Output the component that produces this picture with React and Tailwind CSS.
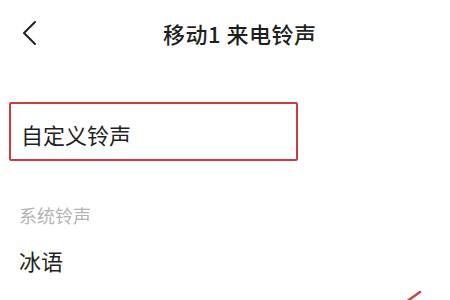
import React from "react";

export default function App() {
  return (
    <div
      className="relative w-[450px] h-[300px] overflow-hidden bg-white text-[#1f1f1f]"
      style={{ fontFamily: '"Noto Sans CJK SC", "Noto Sans", sans-serif' }}
    >
      {/* header */}
      <div className="flex items-center h-[66px] pl-[22px]">
        <svg width="16" height="28" viewBox="0 0 16 28" className="shrink-0">
          <path d="M13 3 L2 14 L13 25" fill="none" stroke="#222" strokeWidth="2" strokeLinecap="round" strokeLinejoin="round" />
        </svg>
        <h1 className="ml-[125px] text-[22px] leading-none font-medium tracking-[0.5px]">移动1 来电铃声</h1>
      </div>

      {/* custom ringtone, highlighted */}
      <div className="mt-[36px] ml-[9px] w-[289px] h-[59px] border-2 border-[#cc3b3d] rounded-[2px] flex items-center pl-[10px] pt-[4px]">
        <span className="text-[22px] leading-none">自定义铃声</span>
      </div>

      {/* system ringtones */}
      <div className="mt-[45px] pl-[19px] text-[18px] leading-none text-[#b3b3b3]">系统铃声</div>
      <div className="mt-[25px] pl-[19px] text-[22px] leading-none">冰语</div>

      {/* red annotation stroke */}
      <svg className="absolute left-[400px] top-[284px]" width="30" height="20" viewBox="0 0 30 20">
        <path d="M20 8 L6 18" stroke="#c8423f" strokeWidth="2.5" strokeLinecap="round" />
      </svg>
    </div>
  );
}
